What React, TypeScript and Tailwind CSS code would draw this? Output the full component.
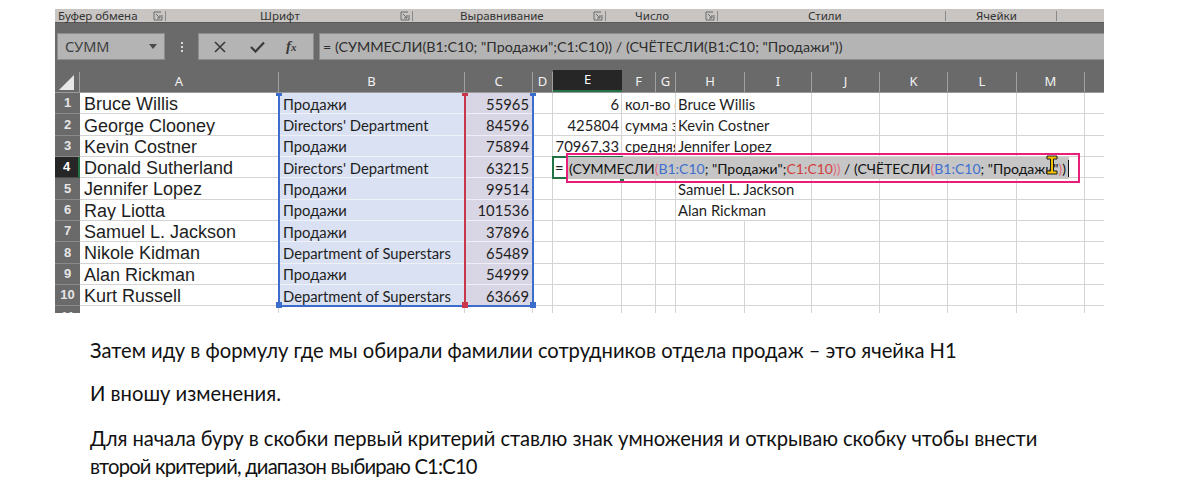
import React from 'react';

const GRID =
  'grid grid-cols-[25px_199px_186px_68px_20px_69px_34px_20px_69px_67px_68px_68px_69px_68px_19px]';

const names = [
  'Bruce Willis',
  'George Clooney',
  'Kevin Costner',
  'Donald Sutherland',
  'Jennifer Lopez',
  'Ray Liotta',
  'Samuel L. Jackson',
  'Nikole Kidman',
  'Alan Rickman',
  'Kurt Russell',
  '',
];
const depts = [
  'Продажи',
  "Directors' Department",
  'Продажи',
  "Directors' Department",
  'Продажи',
  'Продажи',
  'Продажи',
  'Department of Superstars',
  'Продажи',
  'Department of Superstars',
  '',
];
const nums = ['55965', '84596', '75894', '63215', '99514', '101536', '37896', '65489', '54999', '63669', ''];
const eVals = ['6', '425804', '70967,33', '', '', '', '', '', '', '', ''];
const fVals = ['кол-во сотрудников', 'сумма зарплат', 'средняя зарплата', '', '', '', '', '', '', '', ''];
const hVals = ['Bruce Willis', 'Kevin Costner', 'Jennifer Lopez', '', 'Samuel L. Jackson', 'Alan Rickman', '', '', '', '', ''];

const cell = 'h-[21.33px] border-r border-b border-[#d4d4d4] overflow-hidden whitespace-nowrap flex items-center';
const calibri = "font-['Lato',sans-serif] pt-[1px]";

function Launcher() {
  return (
    <svg width="10" height="10" viewBox="0 0 10 10" className="shrink-0">
      <path d="M1 1h7M1 1v8M1 9h8V4" fill="none" stroke="#6b6b6b" strokeWidth="1" />
      <path d="M3 3l4 4M7 4v3H4" fill="none" stroke="#6b6b6b" strokeWidth="1" />
    </svg>
  );
}

function Sep() {
  return <div className="w-px h-[10px] bg-[#8a8a8a]" />;
}

function Row({ i }: { i: number }) {
  const active = i === 3;
  const isB = i < 10;
  return (
    <div className={GRID}>
      <div
        className={`h-[21.33px] border-b flex items-center justify-center font-['Liberation_Sans',sans-serif] font-bold text-[13px] ${
          active
            ? 'bg-[#262626] text-white border-[#4a4a4a] border-r-2 border-r-[#217346]'
            : 'bg-[#6a6a6a] text-[#e6e6e6] border-[#8a8a8a]'
        }`}
      >
        {i + 1}
      </div>
      <div className={`${cell} pl-[4px] pt-[3px] font-['Liberation_Sans',sans-serif] text-[18px] text-[#1e1e1e]`}>{names[i]}</div>
      <div
        className={`${cell} pl-[4px] ${calibri} text-[14.8px] text-[#1e1e1e] ${
          isB ? 'bg-[#d9e1f2] border-b-[#eef1f8] border-r-[#d9e1f2]' : ''
        }`}
      >
        {depts[i]}
      </div>
      <div
        className={`${cell} justify-end pr-[3px] ${calibri} text-[14.8px] text-[#1e1e1e] ${
          isB ? 'bg-[#d8d5e4] border-b-[#efedf5]' : ''
        }`}
      >
        {nums[i]}
      </div>
      <div className={cell} />
      <div className={`${cell} justify-end pr-[2px] ${calibri} text-[14.8px] text-[#1e1e1e]`}>
        {active ? <span className="mr-auto pl-[2px]">=</span> : eVals[i]}
      </div>
      {fVals[i] ? (
        <div className={`${cell} col-span-2 pl-[3px] ${calibri} text-[14.8px] text-[#1e1e1e]`}>{fVals[i]}</div>
      ) : (
        <>
          <div className={cell} />
          <div className={cell} />
        </>
      )}
      {hVals[i] ? (
        <div className={`${cell} col-span-2 pl-[2px] ${calibri} text-[14.8px] text-[#1e1e1e]`}>{hVals[i]}</div>
      ) : (
        <>
          <div className={cell} />
          <div className={cell} />
        </>
      )}
      <div className={cell} />
      <div className={cell} />
      <div className={cell} />
      <div className={cell} />
      <div className="h-[21.33px] border-b border-[#d4d4d4]" />
    </div>
  );
}

const headers = ['A', 'B', 'C', 'D', 'E', 'F', 'G', 'H', 'I', 'J', 'K', 'L', 'M'];

export default function App() {
  return (
    <div className="w-[1184px] h-[477px] bg-white overflow-hidden">
      <div className="ml-[55px] pt-[9px] w-[1049px]">
        <div className="h-[304px] overflow-hidden">
          {/* ribbon group labels */}
          <div className="h-[13px] bg-[#c8c5c2] flex items-center font-['Noto_Sans',sans-serif] text-[11.5px] leading-none text-[#333] relative">
            <span className="absolute left-[3px]">Буфер обмена</span>
            <div className="absolute left-[98px] flex items-center gap-[2px]"><Launcher /><Sep /></div>
            <span className="absolute left-[205px]">Шрифт</span>
            <div className="absolute left-[345px] flex items-center gap-[2px]"><Launcher /><Sep /></div>
            <span className="absolute left-[405px]">Выравнивание</span>
            <div className="absolute left-[538px] flex items-center gap-[2px]"><Launcher /><Sep /></div>
            <span className="absolute left-[580px]">Число</span>
            <div className="absolute left-[650px] flex items-center gap-[2px]"><Launcher /><Sep /></div>
            <span className="absolute left-[753px]">Стили</span>
            <div className="absolute left-[890px]"><Sep /></div>
            <span className="absolute left-[921px]">Ячейки</span>
            <div className="absolute left-[1001px]"><Sep /></div>
          </div>
          {/* formula bar band */}
          <div className="h-[48px] bg-[#6a6a6a] border-t border-[#5a5a5a] pt-[10px]">
            <div className="flex h-[27px] items-stretch">
              <div className="ml-[2px] w-[108px] bg-[#b4b4b4] border border-[#8d8d8d] flex items-center pl-[7px] pr-[7px] font-['Noto_Sans',sans-serif] text-[14.5px] text-[#3f3f3f]">
                <span>СУММ</span>
                <svg width="8" height="5" viewBox="0 0 8 5" className="ml-auto">
                  <path d="M0 0h8L4 5z" fill="#4a4a4a" />
                </svg>
              </div>
              <div className="w-[33px] flex flex-col items-center justify-center gap-[2px]">
                <div className="w-[2px] h-[2px] bg-[#d8d8d8]" />
                <div className="w-[2px] h-[2px] bg-[#d8d8d8]" />
                <div className="w-[2px] h-[2px] bg-[#d8d8d8]" />
              </div>
              <div className="w-[116px] bg-[#b4b4b4] border border-[#8d8d8d] flex items-center">
                <svg width="12" height="12" viewBox="0 0 12 12" className="ml-[15px]">
                  <path d="M1 1l10 10M11 1L1 11" stroke="#3a3a3a" strokeWidth="1.6" />
                </svg>
                <svg width="15" height="12" viewBox="0 0 15 12" className="ml-[24px]">
                  <path d="M1 6l4.5 4.5L14 1.5" fill="none" stroke="#3a3a3a" strokeWidth="2.2" />
                </svg>
                <span className="ml-[21px] font-['Liberation_Serif',serif] italic font-bold text-[15px] text-[#3a3a3a] leading-none">
                  f<span className="text-[11px]">x</span>
                </span>
              </div>
              <div className="ml-[5px] flex-1 bg-[#b4b4b4] border-y border-l border-[#8d8d8d] flex items-center pl-[3px] font-['Lato',sans-serif] text-[14.3px] text-[#2e2e2e] whitespace-nowrap">
                = (СУММЕСЛИ(B1:C10; "Продажи";C1:C10)) / (СЧЁТЕСЛИ(B1:C10; "Продажи"))
              </div>
            </div>
          </div>
          {/* column headers */}
          <div className={`${GRID} h-[23px] bg-[#6a6a6a] border-b border-[#9a9a9a]`}>
            <div className="relative border-r border-[#a0a0a0] mt-[2px]">
              <svg width="15" height="15" viewBox="0 0 15 15" className="absolute left-[4px] bottom-[2px]">
                <path d="M15 0V15H0z" fill="#e8e8e8" />
              </svg>
            </div>
            {headers.map((h) => (
              <div
                key={h}
                className={`flex items-center justify-center font-['Noto_Sans',sans-serif] text-[13px] ${
                  h === 'E'
                    ? 'bg-[#262626] text-white border-b-2 border-[#217346]'
                    : 'text-[#f2f2f2] border-r border-[#a0a0a0] mt-[2px]'
                }`}
              >
                {h}
              </div>
            ))}
            <div />
          </div>
          {/* rows */}
          <div className="relative">
            {Array.from({ length: 11 }).map((_, i) => (
              <Row key={i} i={i} />
            ))}
            {/* blue reference box */}
            <div className="absolute left-[223px] top-0 w-[256px] h-[214px] border-2 border-t-0 border-[#3b6dcc]" />
            <div className="absolute left-[409px] top-0 w-[2px] h-[213px] bg-[#c8374a]" />
            <div className="absolute left-[221px] top-0 w-[6px] h-[3px] bg-[#3b6dcc]" />
            <div className="absolute left-[407px] top-0 w-[6px] h-[3px] bg-[#c8374a]" />
            <div className="absolute left-[475px] top-0 w-[6px] h-[3px] bg-[#3b6dcc]" />
            <div className="absolute left-[221px] top-[209px] w-[6px] h-[6px] bg-[#3b6dcc]" />
            <div className="absolute left-[407px] top-[209px] w-[6px] h-[6px] bg-[#c8374a]" />
            <div className="absolute left-[475px] top-[209px] w-[6px] h-[6px] bg-[#3b6dcc]" />
            {/* active cell */}
            <div className="absolute left-[497px] top-[63px] w-[71px] h-[23px] border-2 border-[#217346]" />
            <div className="absolute left-[564px] top-[83px] w-[6px] h-[6px] bg-[#217346] border border-white" />
            {/* in-cell formula edit */}
            <div className="absolute left-[511px] top-[60px] w-[514px] h-[30px]">
              <div className="absolute left-[1px] top-[4px] w-[502px] h-[22px] bg-[#c6c6c6] flex items-center pl-[2px] font-['Lato',sans-serif] text-[14px] text-[#111] whitespace-nowrap">
                <span>(СУММЕСЛИ</span>
                <span className="text-[#e0707e]">(</span>
                <span className="text-[#3f6fd1]">B1:C10</span>
                <span>; "Продажи";</span>
                <span className="text-[#d33f3f]">C1:C10</span>
                <span className="text-[#e0707e]">))</span>
                <span>&nbsp;/ (СЧЁТЕСЛИ</span>
                <span className="text-[#e0707e]">(</span>
                <span className="text-[#3f6fd1]">B1:C10</span>
                <span>; "Продажи"</span>
                <span className="text-[#e0707e]">)</span>
                <span>)</span>
              </div>
              <div className="absolute left-[502px] top-[7px] w-px h-[17px] bg-[#111]" />
              <div className="absolute inset-0 border-[2.5px] border-[#e91e7a]" />
              <svg width="12" height="20" viewBox="0 0 12 20" className="absolute left-[480px] top-[2px]">
                <path
                  d="M1 1h10v3H7.5v12H11v3H1v-3h3.5V4H1z"
                  fill="#f2c200"
                  stroke="#1a1a1a"
                  strokeWidth="1"
                />
              </svg>
            </div>
          </div>
        </div>
      </div>
      {/* text below */}
      <div className="pl-[90px] font-['Lato',sans-serif] text-[20.2px] text-[#111]">
        <p className="mt-[23px] leading-[28px] whitespace-nowrap">
          Затем иду в формулу где мы обирали фамилии сотрудников отдела продаж – это ячейка H1
        </p>
        <p className="mt-[15px] leading-[28px] whitespace-nowrap">И вношу изменения.</p>
        <p className="mt-[17px] leading-[28px] whitespace-nowrap">
          <span className="tracking-[-0.08px]">
            Для начала буру в скобки первый критерий ставлю знак умножения и открываю скобку чтобы внести
          </span>
          <br />
          <span className="tracking-[-0.8px]">второй критерий, диапазон выбираю C1:C10</span>
        </p>
      </div>
    </div>
  );
}
